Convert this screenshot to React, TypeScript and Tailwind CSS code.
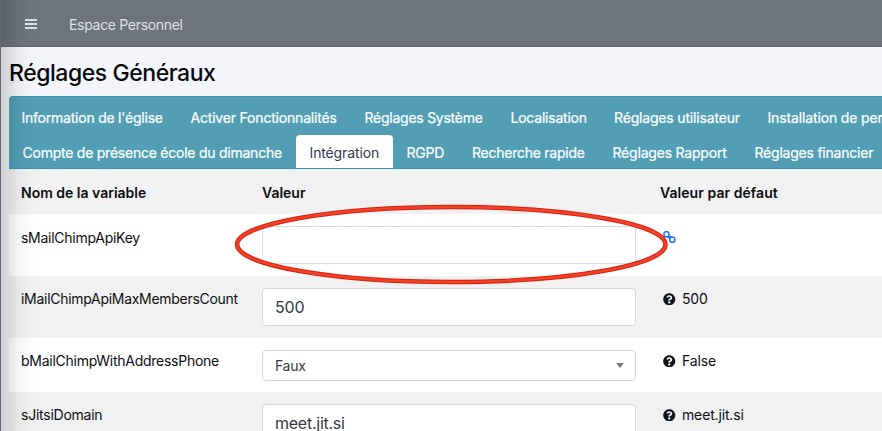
import { FaQuestionCircle } from "react-icons/fa";

type Tab = { label: string; cls: string; active?: boolean };

const firstTabs: Tab[] = [
  { label: "Information de l'église", cls: "w-[169px] tracking-[-0.23px]" },
  { label: "Activer Fonctionnalités", cls: "w-[174px] tracking-[-0.19px]" },
  { label: "Réglages Système", cls: "w-[146px] tracking-[-0.25px]" },
  { label: "Localisation", cls: "w-[103.5px] tracking-[-0.22px]" },
  { label: "Réglages utilisateur", cls: "w-[153.5px] tracking-[-0.17px]" },
  { label: "Installation de per", cls: "w-[210px] tracking-[-0.14px]" },
];

const secondTabs: Tab[] = [
  { label: "Compte de présence école du dimanche", cls: "w-[287px] tracking-[-0.24px]" },
  { label: "Intégration", cls: "w-[97px] tracking-[-0.13px]", active: true },
  { label: "RGPD", cls: "w-[65.5px] tracking-[-0.25px]" },
  { label: "Recherche rapide", cls: "w-[140.5px] tracking-[-0.25px]" },
  { label: "Réglages Rapport", cls: "w-[142px] tracking-[-0.2px]" },
  { label: "Réglages financier", cls: "w-[146px] tracking-[-0.22px]" },
];

function TabRow({ tabs, inset }: { tabs: Tab[]; inset: string }) {
  return (
    <div className={`flex h-[34px] ${inset}`}>
      {tabs.map((t) => (
        <div
          key={t.label}
          className={`flex h-[35px] shrink-0 items-center whitespace-nowrap pl-[13.5px] ${t.cls} ${
            t.active ? "rounded-t bg-white text-[#343a50]" : "text-white [-webkit-text-stroke:0.2px_white]"
          }`}
        >
          <span>{t.label}</span>
        </div>
      ))}
    </div>
  );
}

function Default({ text }: { text: string }) {
  return (
    <div className="flex h-[22px] items-center gap-[6.5px] tracking-[-0.15px]">
      <FaQuestionCircle className="size-[12.5px] text-[#111418]" />
      <span className="-mt-px">{text}</span>
    </div>
  );
}

function ChainIcon() {
  return (
    <svg className="h-3 w-[13px]" viewBox="0 0 13 12" fill="none" stroke="#1673f5" strokeWidth="1.5" strokeLinecap="round">
      <circle cx="3.5" cy="3.2" r="2.6" />
      <circle cx="9.3" cy="8.7" r="2.6" />
      <path d="M5.2 6.3 7.5 5.6" strokeWidth="1.8" />
    </svg>
  );
}

const rowBase = "grid shrink-0 grid-cols-[241px_374px_1fr] pl-3";

export default function App() {
  return (
    <div className="relative flex h-[431px] w-[882px] flex-col overflow-hidden bg-[#f4f5fa] font-['Inter','Liberation_Sans',sans-serif] text-[14px] text-[#0c0e12]">
      <header className="flex h-[47px] shrink-0 items-center border-b border-[#5d646b] bg-[#6d747c] pt-0.5 pl-[25px] text-[#dfe1e4]">
        <div className="flex w-3 flex-col gap-[2px]">
          <i className="h-[2px] bg-current" />
          <i className="h-[2px] bg-current" />
          <i className="h-[2px] bg-current" />
        </div>
        <span className="ml-8 whitespace-nowrap tracking-[-0.31px]">Espace Personnel</span>
      </header>
      <h1 className="flex h-[49px] shrink-0 items-center pt-[3px] pl-[9px] text-[23px] font-medium tracking-[-0.45px] text-[#08090b]">
        Réglages Généraux
      </h1>
      <main className="ml-[9px] flex flex-1 flex-col bg-white">
        <nav className="h-[73px] shrink-0 overflow-hidden rounded-tl border-y border-[#2f9cb4] bg-[#529fb5] pt-1">
          <TabRow tabs={firstTabs} inset="-mt-px mb-px -ml-px" />
          <TabRow tabs={secondTabs} inset="" />
        </nav>
        <section className={`${rowBase} h-[45px] items-center bg-[#f1f1f1] pt-0.5 font-semibold`}>
          <span>Nom de la variable</span>
          <span>Valeur</span>
          <span className="pl-6 tracking-[0.06px]">Valeur par défaut</span>
        </section>
        <section className={`${rowBase} h-[62px] bg-white pt-3`}>
          <span className="pt-px tracking-[-0.27px]">sMailChimpApiKey</span>
          <div className="h-[38px] border border-[#d8dbe0] bg-white" />
          <div className="pt-[5px] pl-[27px]">
            <ChainIcon />
          </div>
        </section>
        <section className={`${rowBase} h-[62px] bg-[#f1f1f1] pt-3`}>
          <span className="tracking-[-0.29px]">iMailChimpApiMaxMembersCount</span>
          <div className="flex h-[38px] items-center rounded border border-[#d4d8dd] bg-white pl-3 text-base tracking-[-0.2px] text-[#343a42]">
            500
          </div>
          <div className="pl-[27px]"><Default text="500" /></div>
        </section>
        <section className={`${rowBase} h-[54px] bg-white pt-3`}>
          <span className="tracking-[-0.26px]">bMailChimpWithAddressPhone</span>
          <div className="flex h-[31px] items-center justify-between rounded border border-[#d4d8dd] bg-white pr-[11px] pl-3 text-[#343a42]">
            <span className="tracking-[-0.3px]">Faux</span>
            <i className="border-x-4 border-t-[5px] border-x-transparent border-t-[#777b7e]" />
          </div>
          <div className="pl-[27px]"><Default text="False" /></div>
        </section>
        <section className={`${rowBase} h-[62px] bg-[#f1f1f1] pt-3`}>
          <span className="tracking-[-0.24px]">sJitsiDomain</span>
          <div className="flex h-[38px] items-center rounded border border-[#d4d8dd] bg-white pl-3 text-base tracking-[-0.25px] text-[#343a42]">
            meet.jit.si
          </div>
          <div className="pl-[27px]"><Default text="meet.jit.si" /></div>
        </section>
      </main>
      <div className="absolute inset-y-0 left-0 w-9 border-l border-[#666] bg-linear-to-r from-black/16 via-black/4 to-transparent" />
      <svg className="absolute top-[200px] left-[230px]" width="444" height="90" fill="none">
        <ellipse cx="221.3" cy="44.5" rx="214.2" ry="37.5" stroke="#df1b0d" strokeWidth="4.5" />
        <ellipse cx="221.3" cy="44.5" rx="214.2" ry="37.5" stroke="#ec4427" strokeWidth="2.4" />
      </svg>
    </div>
  );
}
